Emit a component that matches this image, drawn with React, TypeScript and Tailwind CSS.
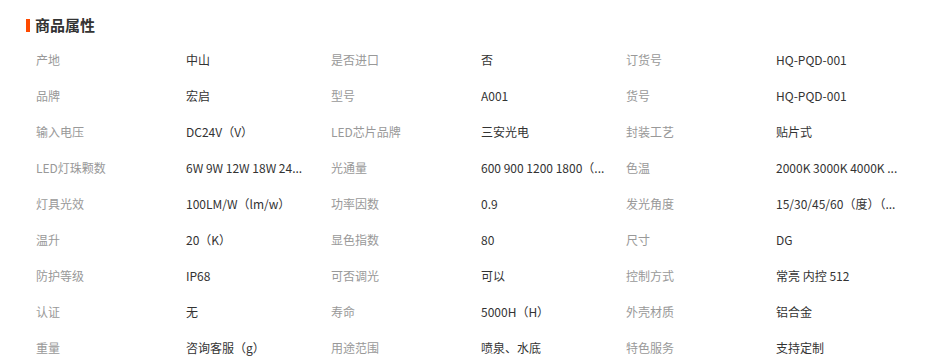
const ROWS: [string, string][][] = [
  [["产地", "中山"], ["是否进口", "否"], ["订货号", "HQ-PQD-001"]],
  [["品牌", "宏启"], ["型号", "A001"], ["货号", "HQ-PQD-001"]],
  [["输入电压", "DC24V（V）"], ["LED芯片品牌", "三安光电"], ["封装工艺", "贴片式"]],
  [
    ["LED灯珠颗数", "6W 9W 12W 18W 24..."],
    ["光通量", "600 900 1200 1800（..."],
    ["色温", "2000K 3000K 4000K ..."],
  ],
  [["灯具光效", "100LM/W（lm/w）"], ["功率因数", "0.9"], ["发光角度", "15/30/45/60（度）（..."]],
  [["温升", "20（K）"], ["显色指数", "80"], ["尺寸", "DG"]],
  [["防护等级", "IP68"], ["可否调光", "可以"], ["控制方式", "常亮 内控 512"]],
  [["认证", "无"], ["寿命", "5000H（H）"], ["外壳材质", "铝合金"]],
  [["重量", "咨询客服（g）"], ["用途范围", "喷泉、水底"], ["特色服务", "支持定制"]],
];

export default function App() {
  return (
    <div
      className="h-[362px] w-[938px] overflow-hidden bg-white pt-[14px]"
      style={{ fontFamily: '"Noto Sans CJK SC", "Noto Sans", sans-serif' }}
    >
      {/* header */}
      <div className="flex h-[22px] items-center pl-[26px]">
        <span className="h-[13px] w-[4px] bg-[#ff4a00]" />
        <h2 className="ml-[5px] text-[15px] font-bold leading-[22px] text-[#333]">商品属性</h2>
      </div>

      {/* attributes */}
      <div className="mt-[6px] grid grid-cols-[150px_145px_150px_145px_150px_145px] pl-[36px] text-[12px]">
        {ROWS.map((row, i) =>
          row.map(([label, value], j) => [
            <div key={`l${i}-${j}`} className="flex h-[36px] items-center text-[#999]">
              {label}
            </div>,
            <div key={`v${i}-${j}`} className="flex h-[36px] items-center whitespace-nowrap text-[#333]">
              {value}
            </div>,
          ])
        )}
      </div>
    </div>
  );
}
